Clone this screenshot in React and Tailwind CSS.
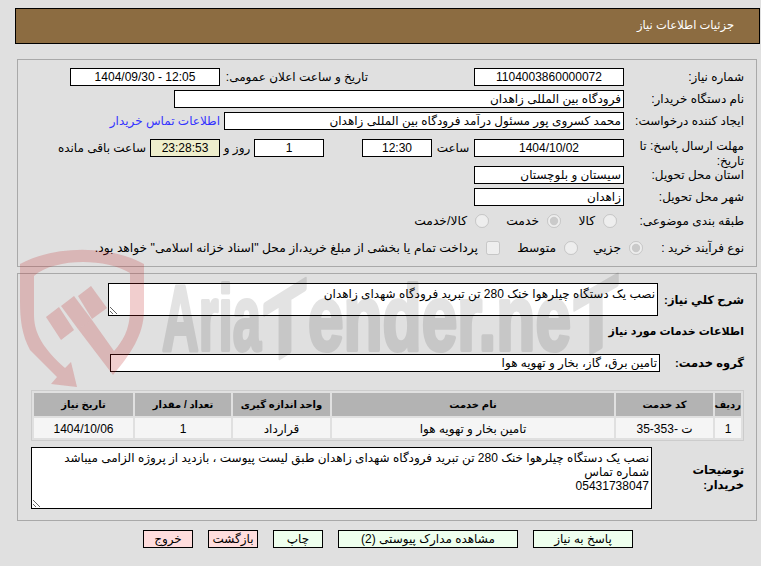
const field = "h-[18px] border border-black bg-white px-[2px] text-[12px] leading-[16px] text-black outline-none";
const boldLabel = "whitespace-nowrap text-[11.5px] font-bold leading-[18px] text-black";

function Field({ width, value, center, bg }) {
  return (
    <input
      readOnly
      value={value}
      className={`${field} ${width} ${center ? "text-center" : "text-right"} ${bg || ""}`}
    />
  );
}

function Row({ label, top, children }) {
  return (
    <div className={`flex h-[18px] items-center ${top}`}>
      <div className="w-[120px] shrink-0 text-[12px]">{label}</div>
      {children}
    </div>
  );
}

function Choice({ type = "radio", checked, name, label, right }) {
  return (
    <label className={`flex items-center whitespace-nowrap ${right}`}>
      <input
        type={type}
        name={name}
        disabled
        defaultChecked={checked}
        className="m-0 h-[14px] w-[14px]"
      />
      <span className="mr-[8px] text-[12.3px]">{label}</span>
    </label>
  );
}

function Btn({ children, width, pink }) {
  return (
    <button
      className={`h-[18px] border border-black text-[12px] leading-[15px] text-black ${width} ${pink ? "bg-[#ffdddd]" : "bg-[#eeffee]"}`}
    >
      {children}
    </button>
  );
}

function Watermark() {
  return (
    <svg dir="ltr" className="pointer-events-none absolute left-0 top-0" width="761" height="566" viewBox="0 0 761 566">
      <g fill="rgba(190,30,30,0.22)">
        <path d="M20 264 C55 245 110 245 144 264 L144 310 C144 335 130 355 113 375 L78 329 L92 320 L114 351 C122 342 130 330 130 310 L130 273 C105 258 55 258 34 276 L34 315 C34 335 45 350 65 368 L71 362 L77 387 L51 384 L57 377 L30 350 C22 335 20 320 20 300 Z" />
        <path d="M46 317 L59 307 L74 330 L61 340 Z" />
        <path d="M61 306 L74 296 L92 320 L78 329 Z" />
        <path d="M78 296 L91 286 L107 308 L92 319 Z" />
      </g>
      <g opacity="0.11" fill="#000" stroke="#000" strokeWidth="4" strokeLinejoin="round" fontFamily="Liberation Sans" fontWeight="700" fontSize="92" direction="ltr">
        <text x="162" y="350" textLength="99" lengthAdjust="spacingAndGlyphs">Aria</text>
        <text transform="translate(264 368) skewY(-32)" textLength="42" lengthAdjust="spacingAndGlyphs">T</text>
        <text x="308" y="350" textLength="263" lengthAdjust="spacingAndGlyphs">ender.ne</text>
        <text transform="translate(574 363) skewY(-30)" textLength="44" lengthAdjust="spacingAndGlyphs">T</text>
      </g>
    </svg>
  );
}

export default function App() {
  return (
    <div
      dir="rtl"
      className="relative h-[566px] w-[761px] overflow-hidden bg-[#e0e0e0] pt-[8px] text-[12px] text-black"
      style={{ fontFamily: '"Liberation Sans", "DejaVu Sans", sans-serif' }}
    >
      <div className="ml-[15px] mr-[1px] flex h-[36px] items-center border border-black bg-[#8c6c41] pr-[25px] text-[11.5px] text-white">
        جزئیات اطلاعات نیاز
      </div>

      <section className="ml-[17px] mr-[4px] mt-[15px] h-[208px] border border-[#a9a9a9] pr-[12px] pt-[8px]">
        <Row label="شماره نیاز:">
          <Field width="w-[150px]" value="1104003860000072" center />
          <div className="w-[254px] pr-[106px] whitespace-nowrap">تاریخ و ساعت اعلان عمومی:</div>
          <Field width="w-[150px]" value="12:05 - 1404/09/30" center />
        </Row>
        <Row label="نام دستگاه خریدار:" top="mt-[4px]">
          <Field width="w-[450px]" value="فرودگاه بین المللی زاهدان" />
        </Row>
        <Row label="ایجاد کننده درخواست:" top="mt-[4px]">
          <Field width="w-[400px]" value="محمد کسروی پور مسئول درآمد فرودگاه بین المللی زاهدان" />
          <a className="mr-[4px] whitespace-nowrap text-[#3333ff]">اطلاعات تماس خریدار</a>
        </Row>
        <div className="mt-[9px] flex h-[18px] items-start">
          <div className="w-[120px] shrink-0 pl-[8px] leading-[15px]">مهلت ارسال پاسخ: تا تاریخ:</div>
          <Field width="w-[150px]" value="1404/10/02" center />
          <div className="w-[42px] text-center leading-[18px]">ساعت</div>
          <Field width="w-[70px]" value="12:30" center />
          <div className="w-[38px]" />
          <Field width="w-[70px]" value="1" center />
          <div className="w-[34px] text-center leading-[18px]">روز و</div>
          <Field width="w-[70px]" value="23:28:53" center bg="!bg-[#eeeecc]" />
          <div className="mr-[4px] whitespace-nowrap leading-[18px]">ساعت باقی مانده</div>
        </div>
        <Row label="استان محل تحویل:" top="mt-[9px]">
          <Field width="w-[150px]" value="سیستان و بلوچستان" />
        </Row>
        <Row label="شهر محل تحویل:" top="mt-[4px]">
          <Field width="w-[150px]" value="زاهدان" />
        </Row>
        <Row label="طبقه بندی موضوعی:" top="mt-[6px]">
          <Choice name="cat" label="کالا" right="mr-[7px] w-[50px]" />
          <Choice name="cat" label="خدمت" checked right="mr-[6px] w-[72px]" />
          <Choice name="cat" label="کالا/خدمت" />
        </Row>
        <Row label="نوع فرآیند خرید :" top="mt-[9px]">
          <Choice name="kind" label="جزیي" checked right="w-[65px] mr-[-19px]" />
          <Choice name="kind" label="متوسط" right="w-[78px]" />
          <Choice type="checkbox" label={'پرداخت تمام یا بخشی از مبلغ خرید،از محل "اسناد خزانه اسلامی" خواهد بود.'} />
        </Row>
      </section>

      <section className="ml-[17px] mr-[4px] mt-[6px] h-[248px] border border-[#a9a9a9] pr-[12px] pt-[9px]">
        <div className="flex items-center">
          <div className={`w-[86px] shrink-0 ${boldLabel}`}>شرح کلي نیاز:</div>
          <textarea
            readOnly
            defaultValue="نصب یک دستگاه چیلرهوا خنک 280 تن تبرید فرودگاه شهدای زاهدان"
            className="block h-[33px] w-[550px] border border-black bg-white px-[2px] pt-[3px] text-[12px] leading-[14px] outline-none"
          />
        </div>
        <div className="mt-[6px] h-[18px] whitespace-nowrap text-[11px] font-bold leading-[18px]">اطلاعات خدمات مورد نیاز</div>
        <div className="mt-[14px] flex items-center">
          <div className={`w-[84px] shrink-0 ${boldLabel}`}>گروه خدمت:</div>
          <Field width="w-[550px]" value="تامین برق، گاز، بخار و تهویه هوا" />
        </div>

        <table className="mt-[18px] w-[713px] table-fixed border-separate border-spacing-[2px] border border-[#cccccc] text-center text-[12px]">
          <thead>
            <tr className="h-[23px] whitespace-nowrap bg-[#b3b3b3] text-[10px] font-bold">
              <th className="w-[26px] p-0">رديف</th>
              <th className="w-[97px] p-0">کد خدمت</th>
              <th className="p-0">نام خدمت</th>
              <th className="w-[97px] p-0">واحد اندازه گیری</th>
              <th className="w-[96px] p-0">تعداد / مقدار</th>
              <th className="w-[99px] p-0">تاریخ نیاز</th>
            </tr>
          </thead>
          <tbody>
            <tr className="h-[20px] bg-[#f5f5f5] leading-[16px]">
              <td className="p-0 pt-[2px]">1</td>
              <td className="p-0 pt-[2px]">ت -353-35</td>
              <td className="p-0 pt-[2px]">تامین بخار و تهویه هوا</td>
              <td className="p-0 pt-[2px]">قرارداد</td>
              <td className="p-0 pt-[2px]">1</td>
              <td className="p-0 pt-[2px]">1404/10/06</td>
            </tr>
          </tbody>
        </table>

        <div className="mt-[6px] flex items-center">
          <div className="w-[92px] shrink-0 text-[11.5px] font-bold leading-[15px]">
            توضیحات
            <br />
            خریدار:
          </div>
          <textarea
            readOnly
            defaultValue={"نصب یک دستگاه چیلرهوا خنک 280 تن تبرید فرودگاه شهدای زاهدان طبق لیست پیوست ، بازدید از پروژه الزامی میباشد\nشماره تماس\n05431738047"}
            className="block h-[62px] w-[621px] border border-black bg-white px-[2px] pt-[3px] text-[12px] leading-[14px] outline-none"
          />
        </div>
      </section>

      <div className="mr-[128px] mt-[9px] flex gap-[15px]">
        <Btn width="w-[100px]">پاسخ به نیاز</Btn>
        <Btn width="w-[180px]">مشاهده مدارک پیوستی (2)</Btn>
        <Btn width="w-[50px]">چاپ</Btn>
        <Btn width="w-[50px]" pink>بازگشت</Btn>
        <Btn width="w-[50px]" pink>خروج</Btn>
      </div>

      <Watermark />
    </div>
  );
}
